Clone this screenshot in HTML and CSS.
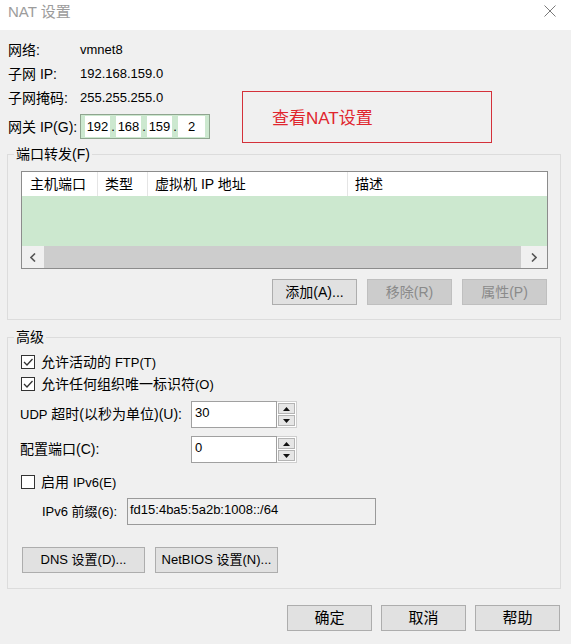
FILE: index.html
```html
<!DOCTYPE html>
<html lang="zh-CN">

<head>
  <meta charset="UTF-8">
  <title>NAT 设置</title>
  <link rel="stylesheet" href="styles.css">
</head>

<body>
  <div class="dialog">
    <div class="titlebar">
      <span class="title">NAT 设置</span>
      <svg class="close" width="12" height="12" viewBox="0 0 12 12">
        <path d="M0.5 0.5 L11.5 11.5 M11.5 0.5 L0.5 11.5" stroke="#7a7a7a" stroke-width="1" fill="none" />
      </svg>
    </div>

    <div class="content">
      <div class="info">
        <div class="info-list">
          <div class="info-row"><span class="info-label">网络:</span><span class="info-value">vmnet8</span></div>
          <div class="info-row"><span class="info-label">子网 IP:</span><span class="info-value">192.168.159.0</span></div>
          <div class="info-row"><span class="info-label">子网掩码:</span><span class="info-value">255.255.255.0</span></div>
          <div class="info-row gateway-row">
            <span class="info-label">网关 IP(G):</span>
            <div class="ip-box">
              <span class="ip-seg">192</span><span class="ip-dot">.</span>
              <span class="ip-seg">168</span><span class="ip-dot">.</span>
              <span class="ip-seg">159</span><span class="ip-dot">.</span>
              <span class="ip-seg ip-last">2</span>
            </div>
          </div>
        </div>
        <div class="note">查看NAT设置</div>
      </div>

      <!-- port forwarding -->
      <fieldset class="group">
        <legend>端口转发(F)</legend>
        <div class="group-body ports-body">
          <div class="grid">
            <div class="grid-head">
              <span class="col col-port">主机端口</span>
              <span class="col col-type">类型</span>
              <span class="col col-ip">虚拟机 IP 地址</span>
              <span class="col col-desc">描述</span>
            </div>
            <div class="grid-rows"></div>
            <div class="hscroll">
              <span class="scroll-arrow">
                <svg width="6" height="9" viewBox="0 0 6 9"><path d="M5 0.5 L1 4.5 L5 8.5" stroke="#555" stroke-width="1.6" fill="none" /></svg>
              </span>
              <span class="scroll-thumb"></span>
              <span class="scroll-arrow scroll-right">
                <svg width="6" height="9" viewBox="0 0 6 9"><path d="M1 0.5 L5 4.5 L1 8.5" stroke="#555" stroke-width="1.6" fill="none" /></svg>
              </span>
            </div>
          </div>
          <div class="btn-row">
            <button class="btn">添加(A)...</button>
            <button class="btn" disabled>移除(R)</button>
            <button class="btn" disabled>属性(P)</button>
          </div>
        </div>
      </fieldset>

      <!-- advanced -->
      <fieldset class="group group-adv">
        <legend>高级</legend>
        <div class="group-body adv-body">
          <label class="check-row">
            <span class="check-box">
              <svg width="12" height="12" viewBox="0 0 12 12"><path d="M2 6 L5 9 L10.5 3" stroke="#333" stroke-width="1.3" fill="none" /></svg>
            </span>
            <span>允许活动的 <span class="small">FTP(T)</span></span>
          </label>
          <label class="check-row">
            <span class="check-box">
              <svg width="12" height="12" viewBox="0 0 12 12"><path d="M2 6 L5 9 L10.5 3" stroke="#333" stroke-width="1.3" fill="none" /></svg>
            </span>
            <span>允许任何组织唯一标识符<span class="small">(O)</span></span>
          </label>

          <div class="field-row udp-row">
            <span class="field-label"><span class="small">UDP</span> 超时(以秒为单位)(U):</span>
            <div class="spin">
              <span class="spin-input">30</span>
              <span class="spin-btns">
                <span class="spin-btn"><svg width="7" height="4" viewBox="0 0 7 4"><path d="M0 4 L3.5 0 L7 4 Z" fill="#111" /></svg></span>
                <span class="spin-btn"><svg width="7" height="4" viewBox="0 0 7 4"><path d="M0 0 L3.5 4 L7 0 Z" fill="#111" /></svg></span>
              </span>
            </div>
          </div>

          <div class="field-row port-row">
            <span class="field-label">配置端口(C):</span>
            <div class="spin">
              <span class="spin-input">0</span>
              <span class="spin-btns">
                <span class="spin-btn"><svg width="7" height="4" viewBox="0 0 7 4"><path d="M0 4 L3.5 0 L7 4 Z" fill="#111" /></svg></span>
                <span class="spin-btn"><svg width="7" height="4" viewBox="0 0 7 4"><path d="M0 0 L3.5 4 L7 0 Z" fill="#111" /></svg></span>
              </span>
            </div>
          </div>

          <label class="check-row ipv6-check">
            <span class="check-box"></span>
            <span>启用 <span class="small">IPv6(E)</span></span>
          </label>

          <div class="field-row prefix-row">
            <span class="field-label prefix-label">IPv6 前缀(6):</span>
            <span class="prefix-input">fd15:4ba5:5a2b:1008::/64</span>
          </div>

          <div class="btn-row adv-btns">
            <button class="btn btn-wide">DNS 设置(D)...</button>
            <button class="btn btn-wide">NetBIOS 设置(N)...</button>
          </div>
        </div>
      </fieldset>

      <div class="footer">
        <button class="btn btn-main">确定</button>
        <button class="btn btn-main">取消</button>
        <button class="btn btn-main">帮助</button>
      </div>
    </div>
  </div>
</body>

</html>
```

FILE: styles.css
```css
* {
  box-sizing: border-box;
}

body {
  margin: 0;
  background: #f0f0f0;
  font-family: "Liberation Sans", "Noto Sans CJK SC", sans-serif;
  font-size: 14px;
  line-height: 18px;
  color: #000;
}

.dialog {
  width: 571px;
  height: 644px;
  background: #f0f0f0;
}

.small {
  font-size: 13px;
}

/* title bar */
.titlebar {
  height: 30px;
  background: #fff;
  display: flex;
  justify-content: space-between;
  align-items: flex-start;
  padding: 3px 15px 0 8px;
}

.title {
  font-size: 15px;
  color: #9c9c9c;
}

.close {
  margin-top: 2px;
}

.content {
  padding: 8px 10px 0 7px;
}

/* top info */
.info {
  display: flex;
  margin-left: 1px;
}

.info-list {
  width: 234px;
}

.info-row {
  display: flex;
  align-items: center;
  height: 24px;
}

.info-label {
  width: 72px;
  flex: none;
}

.info-value {
  font-size: 13px;
}

.gateway-row {
  margin-top: 4px;
  height: 25px;
}

.ip-box {
  display: flex;
  align-items: center;
  width: 130px;
  height: 25px;
  padding: 1px 3px 1px 4px;
  border: 1px solid #8fa58f;
  background: #cce8cf;
  font-size: 13px;
}

.ip-seg {
  width: 25px;
  height: 21px;
  line-height: 21px;
  background: #fff;
  text-align: center;
}

.ip-last {
  width: 27px;
}

.ip-dot {
  width: 6px;
  text-align: center;
}

.note {
  width: 250px;
  height: 52px;
  margin-top: 53px;
  border: 1px solid #d4313a;
  color: #e0262e;
  font-size: 17px;
  display: flex;
  align-items: center;
  padding: 3px 0 0 29px;
}

/* group boxes */
.group {
  width: 554px;
  min-width: 0;
  margin: 2px 0 0;
  padding: 0;
  border: 1px solid #dcdcdc;
}

.group legend {
  margin-left: 6px;
  padding: 0 2px;
  line-height: 18px;
}

.group-adv {
  margin-top: 8px;
}

.ports-body {
  padding: 8px 12px 14px 13px;
}

.adv-body {
  padding: 5px 12px 15px 13px;
}

/* port list */
.grid {
  width: 527px;
  border: 1px solid #8c8c8c;
  background: #fff;
}

.grid-head {
  display: flex;
  height: 24px;
}

.col {
  line-height: 24px;
  padding-left: 7px;
  border-right: 1px solid #e5e5e5;
}

.col-port {
  width: 76px;
  padding-left: 8px;
}

.col-type {
  width: 50px;
}

.col-ip {
  width: 200px;
}

.col-desc {
  flex: 1;
  border-right: none;
}

.grid-rows {
  height: 50px;
  background: #cce8cf;
}

.hscroll {
  display: flex;
  height: 22px;
  background: #f0f0f0;
}

.scroll-arrow {
  width: 22px;
  display: flex;
  align-items: center;
  justify-content: center;
}

.scroll-right {
  width: 26px;
}

.scroll-thumb {
  flex: 1;
  background: #cdcdcd;
}

/* buttons */
.btn-row {
  display: flex;
  justify-content: flex-end;
  gap: 10px;
  margin-top: 10px;
  margin-right: 1px;
}

.btn {
  width: 85px;
  height: 26px;
  padding: 0;
  border: 1px solid #adadad;
  background: #e1e1e1;
  font: inherit;
  color: #000;
}

.btn:disabled {
  background: #cccccc;
  border-color: #bfbfbf;
  color: #8a8a8a;
}

.btn-wide {
  width: 123px;
  font-size: 13px;
}

.btn-main {
  font-size: 15px;
}

.adv-btns {
  justify-content: flex-start;
  margin: 22px 0 0 1px;
}

/* advanced section */
.check-row {
  display: flex;
  align-items: center;
  gap: 6px;
  height: 22px;
}

.check-box {
  width: 14px;
  height: 14px;
  border: 1px solid #333;
  background: #fff;
  display: flex;
  align-items: center;
  justify-content: center;
}

.field-row {
  display: flex;
  align-items: flex-start;
}

.field-label {
  width: 171px;
  margin-left: -1px;
  line-height: 27px;
}

.udp-row {
  margin-top: 6px;
}

.port-row {
  margin-top: 8px;
}

.ipv6-check {
  margin-top: 8px;
}

.spin {
  display: flex;
  height: 27px;
}

.spin-input {
  width: 86px;
  height: 27px;
  border: 1px solid #a0a0a0;
  background: #fff;
  padding: 2px 0 0 3px;
  font-size: 13px;
}

.spin-btns {
  width: 20px;
  display: flex;
  flex-direction: column;
  gap: 1px;
  padding: 1px;
  border: 1px solid #cfcfcf;
  border-left: none;
  background: #fff;
}

.spin-btn {
  flex: 1;
  display: flex;
  align-items: center;
  justify-content: center;
  border: 1px solid #b4b4b4;
  background: #e6e6e6;
}

.prefix-row {
  margin-top: 5px;
}

.prefix-label {
  width: 107px;
  padding-left: 22px;
  font-size: 13px;
}

.prefix-input {
  width: 249px;
  height: 27px;
  border: 1px solid #9a9a9a;
  background: #f0f0f0;
  padding: 2px 0 0 2px;
  font-size: 13px;
}

/* bottom buttons */
.footer {
  display: flex;
  justify-content: flex-end;
  gap: 9px;
  margin-top: 16px;
  padding-right: 1px;
}
```
